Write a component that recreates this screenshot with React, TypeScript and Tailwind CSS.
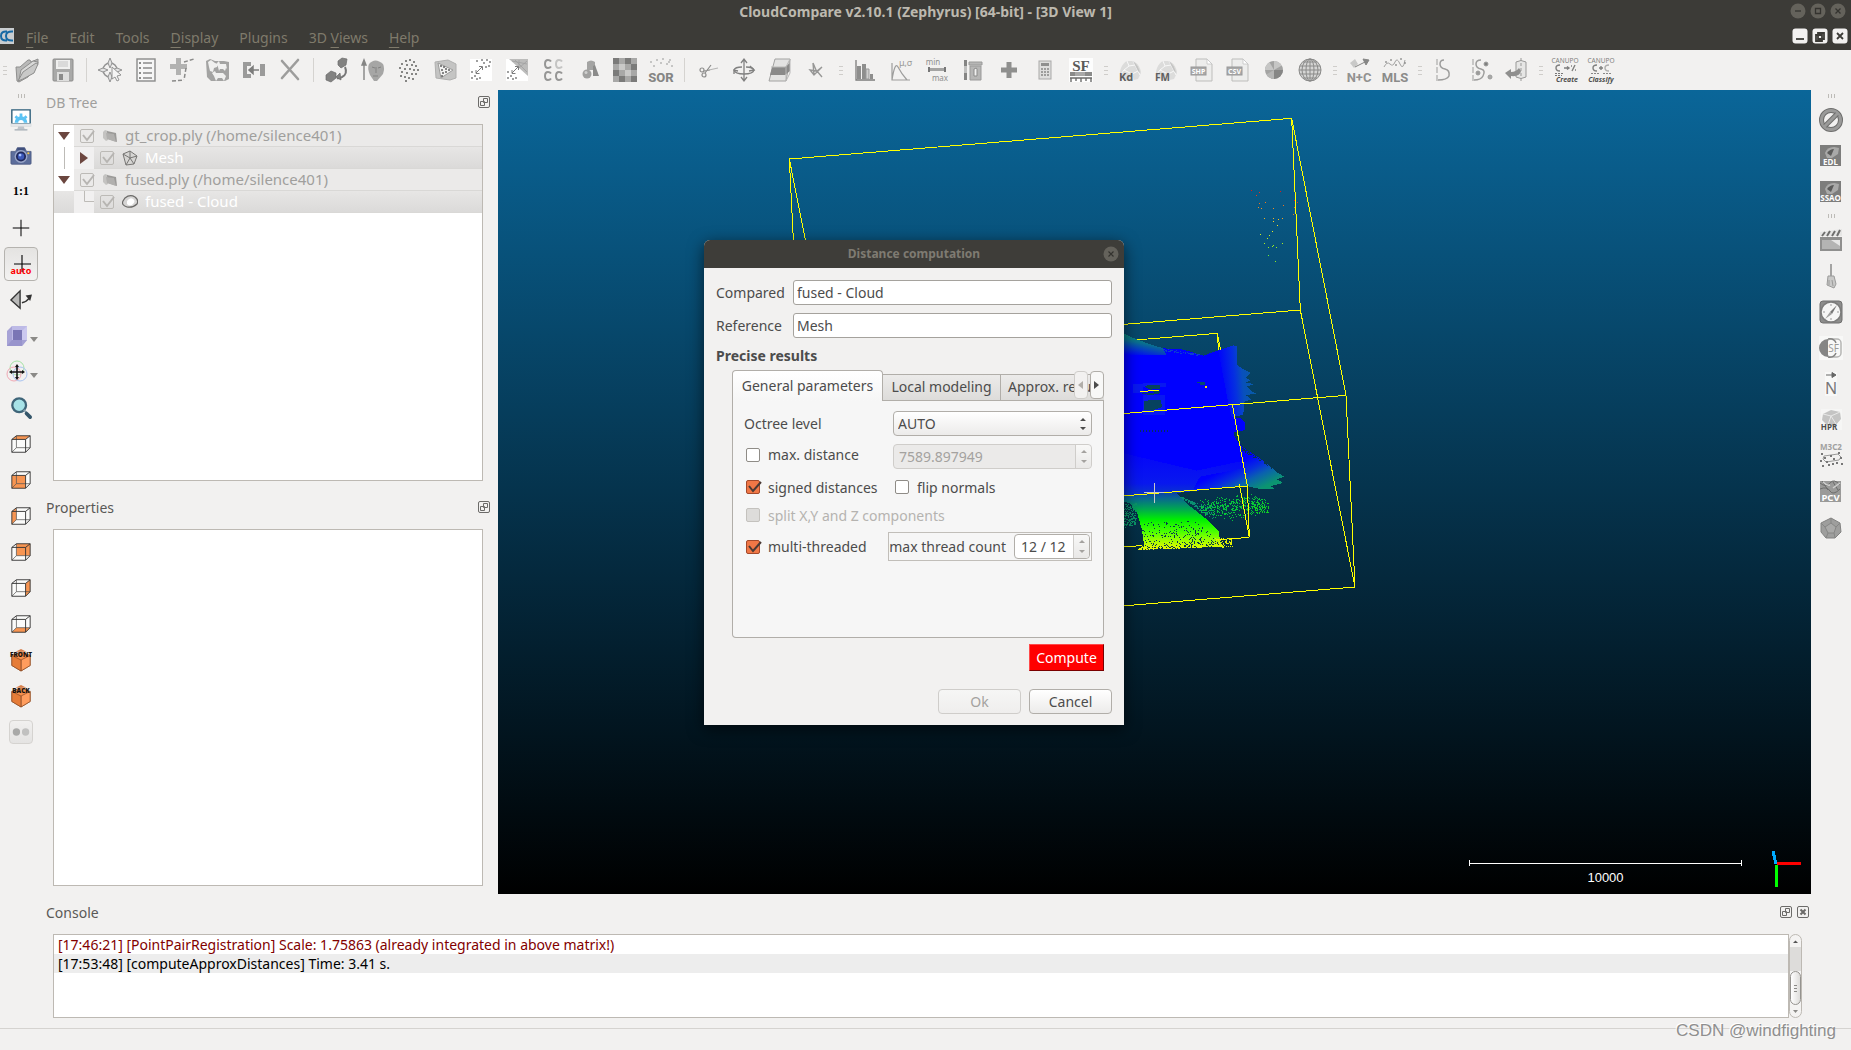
import React, { ReactNode } from 'react';

const SANS = 'font-["Noto_Sans",sans-serif]';

/* ---------- top toolbar icons, all on a 24x24 grid ---------- */

const dots = (pts: number[][], r = 0.8, fill = '#555') =>
  pts.map(([x, y], i) => <rect key={i} x={x - r} y={y - r} width={r * 2} height={r * 2} fill={fill} />);

const rock = (
  <g>
    <path d="M3 20C0 14 4 5 9 3l6 0c5 2 8 8 8 12l-3 6-9 2z" fill="#dcdcdb" />
    <path d="M9 3l2 5-5 4-3 4M11 8l6-1 3 6-6 3-8-4M15 3l2 4M14 16l1 6M20 13l2 4" stroke="#f8f8f8" fill="none" />
    <path d="M17 7l3 6 2 2c-1-5-3-9-7-12z" fill="#c4c4c3" />
  </g>
);

const sheet = (label: string) => (
  <g>
    <path d="M6 1h11l5 5v17H6z" fill="#ededec" stroke="#bdbdbb" />
    <path d="M17 1v5h5z" fill="#fff" stroke="#c4c4c4" strokeWidth=".8" />
    <rect x="1" y="9" width="15" height="8" fill="#a9a9a9" stroke="#989898" />
    <text x="8.5" y="15.6" fontSize="7" fontWeight="700" textAnchor="middle" fill="#fff">{label}</text>
  </g>
);

const ICONS: Record<string, ReactNode> = {
  open: (
    <g strokeLinejoin="round" strokeWidth="1">
      <path d="M1 9l4 0L13 2l2 0 1 2 7-3 0 5-10 13-9 5-2-1z" fill="#b9b9b8" stroke="#8f8f8e" />
      <path d="M4 22L6 12 18 3l5 1-5 11-11 5z" fill="#d9d9d8" stroke="#8f8f8e" />
      <path d="M3 23l5-9L21 5l2 1-4 9-11 6z" fill="#c9c9c8" stroke="#8f8f8e" />
    </g>
  ),
  save: (
    <g>
      <path d="M2 2q0-1 1-1h18q1 0 1 1v20q0 1-1 1H3q-1 0-1-1z" fill="#a9a9a8" stroke="#8d8d8c" />
      <rect x="5" y="2" width="14" height="9" fill="#f0f0ef" />
      <path d="M7 4h10M7 6h10M7 8h10" stroke="#c4c4c4" />
      <rect x="6" y="14" width="12" height="9" fill="#dededd" />
      <rect x="8" y="16" width="4" height="6" fill="#8b8b8a" />
    </g>
  ),
  pick: (
    <g fill="none" stroke="#949494" strokeWidth="1.5">
      <circle cx="12" cy="12" r="7" />
      <path d="M12 0l2 5-2 5-2-5zM12 14l2 5-2 5-2-5zM0 12l5-2 5 2-5 2zM24 12l-5-2-5 2 5 2z" fill="#e4e4e4" strokeWidth="1" />
      <path d="M14 9l9 8-4 1 2 4-2 1-2-4-3 2z" fill="#f5f5f5" strokeWidth="1" />
    </g>
  ),
  list: (
    <g stroke="#8b8b8a">
      <rect x="3" y="1" width="18" height="22" fill="#f6f6f6" strokeWidth="1.4" />
      <path d="M9 5h9M9 10h9M9 15h9M9 20h9" strokeWidth="1.6" />
      <path d="M5 5h2M5 10h2M5 15h2M5 20h2" strokeWidth="2" />
    </g>
  ),
  register: (
    <g>
      <path d="M6 0h5v6h6v5h-6v6H6v-6H0V6h6z" fill="#b2b2b1" />
      <path d="M14 4l10-3M16 10l-2 12M2 23l12-1" stroke="#8a8a89" strokeWidth="1.5" strokeDasharray="4 2" fill="none" />
    </g>
  ),
  clone: (
    <g>
      <path d="M0 3l4-2 5 2h9l5 1v17l-4 2H5l-4-4z" fill="#a3a3a2" />
      <path d="M2 4l3-2 4 3 3 1-1 3-3 1-1 4-3-1-1-4zM11 5l2-2 1 3h6l1 5-1-1-1 3-2-2h-3l-1 2-1-4zM6 15l3-2 1 2h7l3 3-2 5-2-3h-4l-2 3-2-5z" fill="#f0f0ef" />
    </g>
  ),
  merge: (
    <g>
      <path d="M1 4h8v4H5v8h4v4H1zM18 6h5v12h-5z" fill="#9b9b9a" />
      <path d="M17 12H8M11 8.5l-4 3.5 4 3.5z" stroke="#7d7d7c" fill="#7d7d7c" strokeWidth="1.5" />
    </g>
  ),
  cross: <path d="M4 3l16 18M20 2L4 20" stroke="#9d9d9c" strokeWidth="2.6" strokeLinecap="round" />,
  sample: (
    <g fill="#828281" stroke="#6c6c6b" strokeWidth=".7">
      <path d="M13 3l4-3 5 1-1 6-5 3-3-3z" />
      <path d="M1 17l5-4 5 2 0 5-5 4-5-2z" />
      <path d="M20 9q3 7-3 10-3 2-5 1" fill="none" stroke="#777" strokeWidth="2" />
      <path d="M15 15l-4 4 5 3z" />
    </g>
  ),
  mask: (
    <g>
      <path d="M3 22V5M1 7l2-5 2 5z" stroke="#858584" fill="#858584" strokeWidth="1.4" />
      <path d="M8 6q6-7 14 0 2 4 0 10l-6 7h-3l-4-6Q6 10 8 6z" fill="#a6a6a5" />
      <path d="M11 9l3 1M17 10l3-1M15 9v6M12 18l5 0" stroke="#838382" />
    </g>
  ),
  sphereDots: (
    <g>
      {dots([[9, 3], [13, 2], [17, 4], [5, 6], [10, 7], [15, 7], [19, 8], [3, 10], [8, 11], [13, 11], [17, 12], [21, 12], [5, 14], [10, 15], [15, 16], [19, 16], [4, 18], [8, 19], [12, 20], [16, 21], [9, 23]], 0.9, '#6d6d6c')}
    </g>
  ),
  meshSample: (
    <g>
      <path d="M2 4l13-2 8 4v14l-6 2L3 20z" fill="#c4c4c3" stroke="#b0b0af" />
      <path d="M5 5l15 7-12 8z" fill="#f2f2f1" stroke="#9d9d9c" />
      {dots([[8, 8], [11, 9], [9, 12], [13, 11], [16, 12], [10, 15], [13, 14], [9, 18]], 0.8, '#4c4c4c')}
    </g>
  ),
  c2c: (
    <g>
      <rect x="1" y="1" width="22" height="22" fill="#fff" />
      {dots([[8, 3], [13, 2], [18, 2], [21, 4], [15, 5], [20, 8], [17, 9], [3, 14], [6, 18], [3, 20], [8, 21], [11, 20]], 0.8, '#6a6a6a')}
      <path d="M7 15l6-6M10 8.5h3.500v3.500M7 12v3.500h3.500" stroke="#7c7c7c" fill="none" />
    </g>
  ),
  c2m: (
    <g>
      <rect x="1" y="1" width="22" height="22" fill="#fff" />
      <path d="M4 1h19v17z" fill="#bcbcbb" />
      <path d="M10 2l12 12M14 2v8l8-7M7 3l15 3" stroke="#a0a09f" strokeWidth=".8" fill="none" />
      {dots([[3, 14], [6, 18], [3, 20], [8, 21], [11, 20]], 0.8, '#6a6a6a')}
      <path d="M7 15l6-6M10 8.5h3.500v3.500M7 12v3.500h3.500" stroke="#7c7c7c" fill="none" />
    </g>
  ),
  cpc: (
    <g fill="none" stroke="#969695" strokeWidth="2">
      <path d="M10 3.500q-1-1.500-3-1.500-3 0-3 4t3 4q2 0 3-1.500M10 15.500q-1-1.500-3-1.500-3 0-3 4t3 4q2 0 3-1.500M21 15.500q-1-1.500-3-1.500-3 0-3 4t3 4q2 0 3-1.500" />
      <path d="M21 3.500q-1-1.500-3-1.500-3 0-3 4t3 4q2 0 3-1.500" stroke="#c4c4c3" />
    </g>
  ),
  shapes: (
    <g>
      <path d="M10 4q4-3 8 0v8h-8z" fill="#a4a4a3" />
      <path d="M16 8l2-1 4 11h-6z" fill="#8b8b8a" />
      <circle cx="10" cy="16" r="4.5" fill="#a1a1a0" />
      <circle cx="9" cy="14.5" r="1.500" fill="#cfcfce" />
    </g>
  ),
  checker: (
    <g>
      <rect width="24" height="24" fill="#7b7b7a" />
      <path d="M0 6h6v6H0zM12 6h6v6h-6zM6 0h6v6H6zM18 0h6v6h-6zM6 12h6v6H6zM18 12h6v6h-6zM0 18h6v6H0zM12 18h6v6h-6z" fill="#a8a8a7" />
      <path d="M6 6h6v6H6zM12 12h6v6h-6z" fill="#c9c9c8" />
    </g>
  ),
  sor: (
    <g>
      {dots([[2, 4], [8, 2], [14, 1], [21, 2], [5, 8], [12, 5], [18, 6], [23, 8], [20, 4]], 0.8, '#adadac')}
      <text x="12" y="23.5" fontSize="13" fontWeight="800" textAnchor="middle" fill="#858584" fontFamily="Roboto">SOR</text>
    </g>
  ),
  scissors: (
    <g fill="none" stroke="#8d8d8c" strokeWidth="1.2">
      <circle cx="6" cy="12" r="2" />
      <circle cx="8" cy="17" r="2" />
      <path d="M8 13l6-1M9 15l6-8" />
      <path d="M13 12l9-2" stroke="#b5b5b4" />
    </g>
  ),
  move: (
    <g fill="none" stroke="#818180" strokeWidth="1.3">
      <path d="M12 2v20M9 5l3-4 3 4M9 19l3 4 3-4" />
      <path d="M14 9q7 0 8 3-1 4-10 4-9 0-10-4 1-3 8-3" />
      <path d="M6 13l-4-1 0 4M18 8l4 4-5 1" />
    </g>
  ),
  section: (
    <g>
      <path d="M7 1h15l-4 22H1z" fill="#e3e3e2" stroke="#a2a2a1" />
      <path d="M4 9h13l5-4v8l-5 4H2z" fill="#8a8a89" />
      <path d="M18 9l4-8M18 9v14l4-8V1M3 9h14" stroke="#b8b8b7" fill="none" />
    </g>
  ),
  trace: (
    <path d="M9 5l3 7 6 7M9 5l1 12M6 12l7 1 5-4-8 8z" fill="none" stroke="#979796" strokeWidth="1.4" />
  ),
  histogram: (
    <g>
      <path d="M3 2v20h19" fill="none" stroke="#7c7c7b" strokeWidth="1.3" />
      <path d="M4 8h4v13H4zM9 6h4v15H9z" fill="#8e8e8d" />
      <path d="M13 11h3v10h-3z" fill="#cfcfce" stroke="#999" />
      <path d="M17 16h3v5h-3z" fill="#8e8e8d" />
    </g>
  ),
  stats: (
    <g>
      <path d="M3 5v17h18M3 22Q6 3 9 9t9 13" fill="none" stroke="#9d9d9c" strokeWidth="1.2" />
      <text x="10" y="8" fontSize="9" fill="#999998">μ,σ</text>
    </g>
  ),
  minmax: (
    <g fill="#8f8f8e">
      <text x="8" y="7" fontSize="8" textAnchor="middle">min</text>
      <text x="15" y="23" fontSize="8" textAnchor="middle">max</text>
      <rect x="3" y="10" width="18" height="3" fill="#a4a4a3" />
      <path d="M3 9h2v5H3zM19 9h2v5h-2z" fill="#777" />
    </g>
  ),
  trash: (
    <g>
      <path d="M3 2h3v20H3z" fill="#858584" />
      <path d="M3 8h3v7H3z" fill="#c0c0bf" />
      <path d="M8 4h13v3H8zM9 8h11v14H9z" fill="#b6b6b5" stroke="#9a9a99" />
      <path d="M13 11q3-2 3 0v7h-3z" fill="#f0f0ef" stroke="#8b8b8a" />
    </g>
  ),
  plus: <path d="M9.500 4h5v5.500H20v5h-5.500V20h-5v-5.500H4v-5h5.500z" fill="#8f8f8e" />,
  calc: (
    <g>
      <rect x="6" y="3" width="12" height="18" fill="#dededd" stroke="#a9a9a8" />
      <rect x="8" y="5" width="8" height="3" fill="#8f8f8e" />
      <path d="M8 11h8M8 14h8M8 17h8" stroke="#9d9d9c" strokeWidth="2" strokeDasharray="2 1" />
    </g>
  ),
  sf: (
    <g>
      <rect width="24" height="24" fill="#fdfdfd" />
      <text x="12" y="12.5" fontSize="15" fontWeight="700" textAnchor="middle" fill="#5a5a59" fontFamily="Liberation Serif">SF</text>
      <rect x="1" y="14" width="22" height="4" fill="#8b8b8a" />
      <rect x="6" y="14" width="10" height="4" fill="#a9a9a8" />
      <path d="M1 20h22M2 20v4M7 20v3M12 20v4M17 20v3M22 20v4" stroke="#6c6c6b" strokeWidth="1.4" />
    </g>
  ),
  kd: <g>{rock}<text x="1" y="23" fontSize="11" fontWeight="700" fill="#5f5f5e">Kd</text></g>,
  fm: <g>{rock}<text x="1" y="23" fontSize="10" fontWeight="700" fill="#5f5f5e">FM</text></g>,
  shp: sheet('SHP'),
  csv: sheet('CSV'),
  wheel: (
    <g>
      <circle cx="12" cy="12" r="9" fill="#a3a3a2" />
      <path d="M12 12L3 12A9 9 0 0 1 7.500 4.200zM12 12L12 3A9 9 0 0 1 19.800 7.500z" fill="#c6c6c5" />
      <path d="M12 12L21 12A9 9 0 0 1 12 21z" fill="#868685" />
      <path d="M12 12L4.200 16.500A9 9 0 0 0 12 21z" fill="#b5b5b4" />
    </g>
  ),
  globe: (
    <g fill="none" stroke="#8a8a89">
      <circle cx="12" cy="12" r="11" fill="#d5d5d4" />
      <ellipse cx="12" cy="12" rx="4" ry="11" />
      <ellipse cx="12" cy="12" rx="8" ry="11" />
      <path d="M1 12h22M2 8h20M2 16h20M5 4h14M5 20h14M12 1v22" />
    </g>
  ),
  nc: (
    <g>
      <path d="M3 5l5-4 3 5-4 4z" fill="#c9c9c8" />
      <path d="M8 9L20 3M16 1l6 1-3 5z" stroke="#868685" fill="#868685" />
      <text x="12" y="24" fontSize="13" fontWeight="700" textAnchor="middle" fill="#929291" fontFamily="Roboto">N+C</text>
    </g>
  ),
  mls: (
    <g>
      <path d="M1 9q3-6 6-3t5-2 5 2 5-4" stroke="#a1a1a0" fill="none" />
      {dots([[3, 4], [8, 2], [13, 7], [18, 1], [22, 5]], 0.8, '#8b8b8a')}
      <text x="12" y="24" fontSize="13" fontWeight="700" textAnchor="middle" fill="#8b8b8a" fontFamily="Roboto">MLS</text>
    </g>
  ),
  curve: (
    <g fill="none" stroke="#9d9d9c">
      <path d="M5 1v22" strokeDasharray="6 2" />
      <path d="M12 2q-4 0-4 4 0 4 5 5t4 7q-2 4-11 4" strokeWidth="1.500" />
    </g>
  ),
  curveDots: (
    <g fill="none" stroke="#9d9d9c">
      <path d="M5 1v22" strokeDasharray="6 2" />
      <path d="M13 2q-5 0-5 4 0 4 5 5t2 7q-2 4-9 4" strokeWidth="1.500" />
      <circle cx="18" cy="6" r="2" fill="#7f7f7e" />
      <circle cx="10" cy="15" r="2" fill="#9b9b9a" />
      <circle cx="22" cy="19" r="2" fill="#a9a9a8" />
    </g>
  ),
  unroll: (
    <g>
      <path d="M12 4q5-3 10 0v15q-5 3-10 0z" fill="#e6e6e5" stroke="#999998" />
      <path d="M17 0v24" stroke="#999998" strokeDasharray="3 2" />
      <path d="M17 13q-1 6-10 5v3l-6-6 6-4v3q5 0 8-4z" fill="#8f8f8e" />
    </g>
  ),
  canupoCreate: (
    <g fill="#7f7f7e" textAnchor="middle">
      <text x="12" y="5" fontSize="6.5">CANUPO</text>
      <path d="M7 7q-4 0-4 3t4 3M11 10h4M14 8.500l2 1.500-2 1.500M22 7l-3 6M18 8h1M22 12h1" stroke="#7f7f7e" fill="none" strokeWidth="1.4" />
      <path d="M2 15.500h9M2 17.500h7" stroke="#777" strokeDasharray="2 1" />
      <text x="14" y="23.5" fontSize="7" fontWeight="700" fontStyle="italic" fill="#4f4f4e">Create</text>
    </g>
  ),
  canupoClassify: (
    <g fill="#7f7f7e" textAnchor="middle">
      <text x="12" y="5" fontSize="6.5">CANUPO</text>
      <path d="M8 7q-4 0-4 3t4 3M12 8v4M10 10h4" stroke="#7f7f7e" fill="none" strokeWidth="1.4" />
      <path d="M20 7q-4 0-4 3t4 3" stroke="#adadac" fill="none" strokeWidth="1.4" />
      <path d="M2 15.500h8M14 15.500h8" stroke="#888" strokeDasharray="2 1" />
      <text x="12" y="23.5" fontSize="7" fontWeight="700" fontStyle="italic" fill="#4f4f4e">Classify</text>
    </g>
  ),
};

/* ---------- left view toolbar ---------- */

const wire = (face: string) => (
  <g strokeLinejoin="round">
    <path d="M2 7h15v14H2zM7 3h15v13H7z" fill="#fbfbfa" />
    <path d={face} fill="#f79552" />
    <path d="M7 3v13h15M7 16l-5 5" fill="none" stroke="#555" strokeWidth=".8" />
    <path d="M2 7h15v14H2zM2 7l5-4h15v13l-5 5M17 7l5-4" fill="none" stroke="#333" strokeWidth="1" />
  </g>
);

const box = (label: string) => (
  <g>
    <path d="M12 3l10 4v11l-10 6-10-6V7z" fill="#f68f4c" stroke="#9a5b33" strokeWidth=".8" />
    <path d="M12 12l10-5v11l-10 6z" fill="#ff9d5e" stroke="#8a4c26" strokeWidth=".8" />
    <path d="M12 12L2 7v11l10 6z" fill="#e67c38" stroke="#8a4c26" strokeWidth=".8" />
    <path d="M6 3l6-3 6 3z" fill="#d8804c" />
    <text x="12" y="8.5" fontSize="7" fontWeight="900" textAnchor="middle" fill="#15110f">{label}</text>
  </g>
);

const LEFT: Record<string, ReactNode> = {
  display: (
    <g>
      <path d="M2 1h20v15H2z" fill="#fff" stroke="#2c5d7a" strokeWidth="1.5" />
      <path d="M5 15a7 7 0 0 1 14 0h-4a3 3 0 0 0-6 0z" fill="#5cc3f4" />
      <path d="M6 8l2 2M12 5v4M18 8l-2 2" stroke="#5cc3f4" strokeWidth="3" />
      <path d="M1 16h22v3H1z" fill="#e6e7ea" stroke="#cfd2d6" strokeWidth=".5" />
      <path d="M9 19h6l1 3H8z" fill="#bfc4ca" />
      <path d="M5 22h14v1.500H5z" fill="#a8b0b8" />
    </g>
  ),
  camera: (
    <g>
      <path d="M1 7h5l2-4h8l2 4h5v13q0 1-1 1H2q-1 0-1-1z" fill="#5c6d9b" stroke="#47557d" strokeWidth=".8" />
      <path d="M8 3h8v3H8z" fill="#3f4f7c" />
      <circle cx="12" cy="12.5" r="7" fill="#9aa6c8" />
      <circle cx="12" cy="12.5" r="5.5" fill="#20295c" />
      <circle cx="12" cy="12.5" r="3.5" fill="#3b57b8" />
      <circle cx="11" cy="11" r="1.500" fill="#a9c4ff" />
      <circle cx="20" cy="9" r="1.200" fill="#f5c542" />
    </g>
  ),
  one: <text x="12" y="15.5" fontSize="13" fontWeight="700" textAnchor="middle" fill="#000" fontFamily="Liberation Serif">1:1</text>,
  plus: <path d="M12 3v18M3 12h18" stroke="#000" strokeWidth="1.1" />,
  mirror: (
    <g>
      <path d="M11 2v19L1 12z" fill="#b9b9b8" stroke="#333" strokeWidth="1.5" />
      <path d="M13 15q5-1 8-5" fill="none" stroke="#333" strokeWidth="1.6" />
      <path d="M17 7l7-1-2 7z" fill="#333" />
    </g>
  ),
  magnifier: (
    <g>
      <circle cx="10" cy="9" r="7.5" fill="#a7e3e8" stroke="#3f6579" strokeWidth="2.5" />
      <path d="M15 14l3 3" stroke="#8aa0ad" strokeWidth="2" />
      <path d="M18 18l4 4" stroke="#35566a" strokeWidth="4" strokeLinecap="round" />
    </g>
  ),
  top: wire('M2 7l5-4h15l-5 4z'),
  front: wire('M2 7h15v14H2z'),
  left: wire('M2 7l5-4v13l-5 5z'),
  back: wire('M7 3h15v13H7z'),
  right: wire('M17 7l5-4v13l-5 5z'),
  bottom: wire('M2 21l5-5h15l-5 5z'),
  isoFront: box('FRONT'),
  isoBack: box('BACK'),
  stereo: (
    <g>
      <circle cx="7" cy="12" r="4" fill="#a9a9a8" />
      <circle cx="17" cy="12" r="4" fill="#c1c1c0" />
    </g>
  ),
  cube: (
    <g>
      <path d="M2 7l5-5h15v14l-5 6H2z" fill="#a7a3d6" />
      <path d="M7 2h15v14H7z" fill="#bdbae6" />
      <path d="M8 6h9v10H8z" fill="#7a76b5" />
      <path d="M17 7l5-5v14l-5 6z" fill="#d1cff2" opacity=".7" />
      <path d="M2 22l5-6h15l-5 6z" fill="#8e8ac4" opacity=".6" />
    </g>
  ),
  pan: (
    <g>
      <circle cx="12" cy="8" r="7" fill="none" stroke="#a5e3a5" />
      <circle cx="9" cy="14" r="7" fill="none" stroke="#f0a9b4" />
      <circle cx="15" cy="14" r="7" fill="none" stroke="#a9c4f0" />
      <path d="M12 6v12M6 12h12" stroke="#111" strokeWidth="1.6" />
      <path d="M10 7l2-3 2 3zM10 17l2 3 2-3zM7 10l-3 2 3 2zM17 10l3 2-3 2z" fill="#111" />
    </g>
  ),
};

/* ---------- right plugin toolbar ---------- */

const shader = (label: string) => (
  <g>
    <rect x="1" y="1" width="21" height="21" fill="#7d7d7c" />
    <path d="M6 9q2-6 9-6l5 1-1 6-6 4-5 0z" fill="#a9a9a8" />
    <path d="M8 9q3-4 7-4l-3 7z" fill="#5c5c5b" />
    <text x="11.5" y="21" fontSize="8" fontWeight="700" textAnchor="middle" fill="#fff">{label}</text>
  </g>
);

const RIGHT: Record<string, ReactNode> = {
  none: (
    <g fill="none">
      <circle cx="12" cy="12" r="9.5" stroke="#6d6d6c" strokeWidth="5" />
      <circle cx="12" cy="12" r="9.5" stroke="#9a9a99" strokeWidth="3" />
      <path d="M6 18L18 6" stroke="#6d6d6c" strokeWidth="5" />
      <path d="M5.500 18.500L18.500 5.500" stroke="#9a9a99" strokeWidth="3" />
    </g>
  ),
  edl: shader('EDL'),
  ssao: shader('SSAO'),
  clapper: (
    <g>
      <rect x="1" y="9" width="22" height="14" fill="#8f8f8e" />
      <rect x="3" y="12" width="18" height="9" fill="#b4b4b3" />
      <path d="M12 12h9v6z" fill="#e6e6e5" />
      <path d="M1 4l22-3v7H1z" fill="#e6e6e5" />
      <path d="M3 8l3-4M8 8l3-5M13 8l3-5M18 8l3-6" stroke="#6f6f6e" strokeWidth="2" />
    </g>
  ),
  broom: (
    <g>
      <path d="M12 0v13" stroke="#a4a4a3" strokeWidth="2" />
      <path d="M9 12h6l2 8-2 4-7-3z" fill="#c9c9c8" stroke="#9b9b9a" />
      <path d="M10 16l0 5M13 16l1 6" stroke="#9b9b9a" />
    </g>
  ),
  compass: (
    <g>
      <rect x="1" y="1" width="22" height="22" rx="3" fill="#8d8d8c" stroke="#6f6f6e" />
      <circle cx="12" cy="12" r="10" fill="#f6f6f5" stroke="#7c7c7b" strokeWidth="1.500" />
      <path d="M18 5l-5 9-2-2z" fill="#777" />
      <path d="M6 19l5-7 2 2z" fill="#a0a09f" />
      <path d="M12 4v2M12 18v2M4 12h2M18 12h2" stroke="#999" />
    </g>
  ),
  sf: (
    <g>
      <rect width="24" height="24" fill="#f8f8f7" />
      <rect x="8" y="3" width="14" height="18" rx="4" fill="none" stroke="#b5b5b4" strokeWidth="1.500" />
      <path d="M9 3a9 9 0 0 0 0 18z" fill="#858584" />
      <path d="M9 3q6-1 8 4M9 21q6 1 8-4" stroke="#858584" fill="none" strokeWidth="1.500" />
      <text x="14.5" y="16" fontSize="10" textAnchor="middle" fill="#9a9a99">SF</text>
    </g>
  ),
  normal: (
    <g>
      <rect x="6" width="12" height="24" fill="#f8f8f7" />
      <path d="M7 3h7M13 0.500l4 2.500-4 2.500z" stroke="#666" fill="#666" />
      <text x="12" y="22" fontSize="16" textAnchor="middle" fill="#777">N</text>
    </g>
  ),
  hpr: (
    <g>
      <rect x="2" y="1" width="21" height="21" fill="#f6f6f5" />
      <path d="M4 6l8-4 9 2 1 7-6 7-8-1-5-5z" fill="#c4c4c3" />
      <path d="M4 6l8 2 9-4M12 8l-3 9M12 8l5 8" stroke="#e9e9e8" fill="none" />
      <text x="10" y="21.5" fontSize="8" fontWeight="700" textAnchor="middle" fill="#4c4c4b">HPR</text>
    </g>
  ),
  m3c2: (
    <g>
      <text x="12" y="6" fontSize="8" fontWeight="700" textAnchor="middle" fill="#a0a09f">M3C2</text>
      <path d="M5 12l14-2 3 3-2 3-13 2-3-3z" fill="none" stroke="#9a9a99" />
      {dots([[3, 10], [6, 14], [2, 17], [8, 18], [12, 12], [15, 15], [20, 9], [22, 14], [18, 19], [10, 21], [4, 22], [14, 20], [23, 20]], 1, '#777')}
    </g>
  ),
  pcv: (
    <g>
      <rect x="1" y="1" width="21" height="21" fill="#9a9a99" />
      <path d="M1 3q6 5 10 0t10 2M3 1l6 9M14 2l5 8M1 9q7-3 10 2t10-2" stroke="#6c6c6b" fill="none" />
      <path d="M4 2q4 4 7 3M14 8l7-5" stroke="#cfcfce" fill="none" strokeWidth="1.500" />
      <text x="11.5" y="21" fontSize="9.5" fontWeight="700" textAnchor="middle" fill="#fff">PCV</text>
    </g>
  ),
  poly: (
    <g>
      <path d="M12 2l9 5 1 9-6 6H7l-5-6V7z" fill="#9e9e9d" stroke="#828281" />
      <path d="M12 7l5 4-2 6H9l-3-6z" fill="#a9a9a8" stroke="#868685" />
      <path d="M12 7V2M17 11l4-4M15 17l1 5M9 17l-2 5M6 11L2 7" stroke="#868685" />
    </g>
  ),
};

const Glyph = ({ children, className = 'h-6 w-6' }: { children: ReactNode; className?: string }) => (
  <svg viewBox="0 0 24 24" className={`${className} shrink-0 overflow-visible`} aria-hidden="true">{children}</svg>
);

const TOP_BAR = [
  'open', 'save', '|', 'pick', 'list', 'register', 'clone', 'merge', 'cross', '|',
  'sample', 'mask', 'sphereDots', 'meshSample', 'c2c', 'c2m', 'cpc', 'shapes', 'checker', 'sor', '|',
  'scissors', 'move', 'section', 'trace', ':', 'histogram', 'stats', 'minmax', 'trash', 'plus', 'calc', 'sf', ':',
  'kd', 'fm', 'shp', 'csv', 'wheel', 'globe', ':', 'nc', 'mls', ':', 'curve', 'curveDots', 'unroll', ':',
  'canupoCreate', 'canupoClassify',
];

const Grip = () => (
  <span className="flex w-1 flex-col gap-[3px]">
    <i className="h-px bg-[#cfcdca]" />
    <i className="h-px bg-[#cfcdca]" />
    <i className="h-px bg-[#cfcdca]" />
  </span>
);

const SideGrip = () => (
  <div className="flex h-3 items-center justify-center gap-[2px]">
    <i className="h-1 w-px bg-[#bdbbb7]" />
    <i className="h-1 w-px bg-[#bdbbb7]" />
    <i className="h-1 w-px bg-[#bdbbb7]" />
  </div>
);

const TopToolbar = () => (
  <div className="flex h-10 shrink-0 items-center bg-[#f2f1f0]">
    <div className="flex w-[9px] justify-center"><Grip /></div>
    {TOP_BAR.map((name, i) => {
      if (name === '|') {
        return <span key={i} className="flex w-[11px] justify-center"><i className="h-6 w-px bg-[#d5d3d0]" /></span>;
      }
      if (name === ':') {
        return <span key={i} className="flex w-[13px] justify-center"><Grip /></span>;
      }
      return (
        <button key={i} type="button" aria-label={name} className="flex h-9 w-9 items-center justify-center">
          <Glyph>{ICONS[name]}</Glyph>
        </button>
      );
    })}
  </div>
);

const LeftToolbar = () => (
  <div className="flex w-[42px] shrink-0 flex-col">
    <SideGrip />
    {['display', 'camera', 'one', 'plus', 'auto', 'mirror', 'cube', 'pan', 'magnifier', 'top', 'front', 'left', 'back', 'right', 'bottom', 'isoFront', 'isoBack', 'stereo'].map((name) => {
      if (name === 'auto') {
        return (
          <button key={name} type="button" aria-label={name} className="flex h-9 items-center justify-center">
            <span className="flex h-[34px] w-[34px] items-center justify-center rounded border border-[#b5b3af] bg-linear-to-b from-[#e4e3e1] to-[#f3f2f1]">
              <Glyph>
                <path d="M13 3v17M5 12h17" stroke="#000" strokeWidth="1.1" />
                <text x="12" y="22" fontSize="9" fontWeight="700" textAnchor="middle" fill="#f00">auto</text>
              </Glyph>
            </span>
          </button>
        );
      }
      if (name === 'cube' || name === 'pan') {
        return (
          <button key={name} type="button" aria-label={name} className="flex h-9 items-center gap-px pl-[5px]">
            <Glyph>{LEFT[name]}</Glyph>
            <svg viewBox="0 0 8 6" className="mt-2 h-[6px] w-2"><path d="M0 0h8L4 5z" fill="#8b8a87" /></svg>
          </button>
        );
      }
      if (name === 'stereo') {
        return (
          <button key={name} type="button" aria-label={name} className="flex h-9 items-center justify-center">
            <span className="rounded-sm border border-[#d5d3d0] bg-linear-to-b from-[#f1f0ef] to-[#e4e3e2]">
              <Glyph className="h-[22px] w-[22px]">{LEFT[name]}</Glyph>
            </span>
          </button>
        );
      }
      return (
        <button key={name} type="button" aria-label={name} className="flex h-9 items-center justify-center">
          <Glyph className="h-[22px] w-[22px]">{LEFT[name]}</Glyph>
        </button>
      );
    })}
  </div>
);

const RightToolbar = () => (
  <div className="flex w-10 shrink-0 flex-col">
    <SideGrip />
    {['none', 'edl', 'ssao', ':', 'clapper', 'broom', 'compass', 'sf', 'normal', 'hpr', 'm3c2', 'pcv', 'poly'].map((name) =>
      name === ':' ? (
        <SideGrip key={name} />
      ) : (
        <button key={name} type="button" aria-label={name} className="flex h-9 items-center justify-center">
          <Glyph>{RIGHT[name]}</Glyph>
        </button>
      )
    )}
  </div>
);

/* ---------- header ---------- */

const MENU: [string, string, string][] = [
  ['', 'F', 'ile'],
  ['Edit', '', ''],
  ['Tools', '', ''],
  ['', 'D', 'isplay'],
  ['Plugins', '', ''],
  ['3D ', 'V', 'iews'],
  ['', 'H', 'elp'],
];

const Header = () => (
  <header className="shrink-0 bg-[#3c3b37]">
    <div className="relative flex h-[22px] items-center justify-center">
      <h1 className="text-[14px] font-bold text-[#bdb9af]">CloudCompare v2.10.1 (Zephyrus) [64-bit] - [3D View 1]</h1>
      <div className="absolute right-[5px] flex gap-1">
        {['M5 8h6', 'M5.500 5.500h5v5h-5z', 'M5.500 5.500l5 5M10.500 5.500l-5 5'].map((d) => (
          <button key={d} type="button" aria-label="Window control" className="h-4 w-4">
            <svg viewBox="0 0 16 16"><circle cx="8" cy="8" r="7.5" fill="#64625b" /><path d={d} stroke="#34332f" fill="none" strokeWidth="1.3" /></svg>
          </button>
        ))}
      </div>
    </div>
    <div className="flex h-7 items-center text-[14px] text-[#7f7a6b]">
      <svg viewBox="0 0 14 16" className="mr-3 h-4 w-[14px]">
        <rect width="14" height="16" fill="#c9cdd0" />
        <path d="M7 3.500Q1 3 1 8t6 4.500M13 3.500Q6 3 6 8t7 4.500" fill="none" stroke="#1669a4" strokeWidth="2" />
      </svg>
      <nav className="flex flex-1 gap-[21px] pt-[2px]">
        {MENU.map(([before, key, after]) => (
          <button key={before + key + after} type="button">
            {before}<span className="underline underline-offset-4">{key}</span>{after}
          </button>
        ))}
      </nav>
      <div className="flex gap-1 pr-[3px]">
        {['M4 11h8', 'M6 5h6v6H6zM4 7h6v6H4z', 'M5 5l6 6M11 5l-6 6'].map((d) => (
          <button key={d} type="button" aria-label="View control" className="h-4 w-4">
            <svg viewBox="0 0 16 16"><rect x="0.5" y="0.5" width="15" height="15" rx="3" fill="#f2f1f0" /><path d={d} stroke="#3c3b37" fill="none" strokeWidth="1.8" /></svg>
          </button>
        ))}
      </div>
    </div>
  </header>
);

/* ---------- docks ---------- */

const FloatButton = ({ close = false }: { close?: boolean }) => (
  <button type="button" aria-label={close ? 'Close' : 'Float'} className="h-3 w-3 text-[#6c6b69]">
    <svg viewBox="0 0 12 12" fill="none" stroke="currentColor">
      <rect x="0.5" y="0.5" width="11" height="11" rx="1.500" />
      {close ? <path d="M3.500 3.500l5 5M8.500 3.500l-5 5" strokeWidth="2" /> : <path d="M5.500 2.500h4v4h-4zM2.500 5.500h4v4h-4z" />}
    </svg>
  </button>
);

const DockTitle = ({ title, dim = false, closable = false }: { title: string; dim?: boolean; closable?: boolean }) => (
  <div className={`mb-[10px] flex h-6 shrink-0 items-center justify-between pl-1 ${dim ? 'text-[#a09f9d]' : 'text-[#5a5957]'} ${closable ? 'pr-[2px]' : 'pr-2'}`}>
    <h2 className="text-[14px]">{title}</h2>
    <span className="flex gap-[5px]">
      <FloatButton />
      {closable && <FloatButton close />}
    </span>
  </div>
);

const FolderIcon = () => (
  <svg viewBox="0 0 16 16" className="h-4 w-4">
    <path d="M1 4l2-2 3 1v9l-2 1-3-3z" fill="#c4c3c1" />
    <path d="M5 3l9 2 1 9-9-3z" fill="#9b9a98" />
    <path d="M4 5l8 1 2 8-9-3z" fill="#b1b0ae" />
  </svg>
);

const MeshIcon = () => (
  <svg viewBox="0 0 16 16" className="h-4 w-4" fill="none" stroke="#777674">
    <path d="M1 4l7-3 7 5-3 8-8 1z" fill="#d6d5d3" />
    <path d="M1 4l7 4V1M15 6L8 8l4 6M4 15l4-7" />
  </svg>
);

const CloudIcon = () => (
  <svg viewBox="0 0 16 16" className="h-4 w-4">
    <path d="M3 4q5-4 10-1 4 3 2 7-4 4-10 3-6-2-4-6z" fill="#d6d5d4" stroke="#6a6967" strokeWidth="1.2" />
    <path d="M5 7q3-4 6-2t0 5-6 0z" fill="#fff" />
  </svg>
);

interface TreeRowProps {
  label: string;
  icon: ReactNode;
  indent: ReactNode;
  selected?: boolean;
}

const TreeRow = ({ label, icon, indent, selected = false }: TreeRowProps) => (
  <li className="flex h-[22px]">
    {indent}
    <label className={`flex flex-1 items-center border-b border-[#d9d8d6] pl-[6px] ${selected ? 'bg-linear-to-b from-[#e7e6e5] to-[#dbdad9] text-white' : 'bg-[#ebeae9] text-[#a09f9d]'}`}>
      <span className="relative h-[14px] w-[14px]">
        <input type="checkbox" defaultChecked className="block h-[14px] w-[14px] appearance-none rounded-[2px] border border-[#bcbab6]" />
        <svg viewBox="0 0 14 14" className="pointer-events-none absolute inset-0 overflow-visible"><path d="M3 6l4 5 7-9" fill="none" stroke="#b7b5b2" strokeWidth="2" /></svg>
      </span>
      <span className="ml-2 mr-[7px]">{icon}</span>
      <span className="text-[15px]">{label}</span>
    </label>
  </li>
);

const Cell = ({ className = '', d, stroke }: { className?: string; d: string; stroke?: boolean }) => (
  <svg viewBox="0 0 20 22" className={`h-[22px] w-5 shrink-0 ${className}`}>
    <path d={d} fill={stroke ? 'none' : '#6b463f'} stroke={stroke ? '#bdbbb7' : 'none'} />
  </svg>
);

const DOWN = 'M4 7h12l-6 8z';

const DbTree = () => (
  <ul className="ml-[11px] mr-[15px] min-h-0 flex-1 border border-[#bdb9b3] bg-white">
    <TreeRow label="gt_crop.ply (/home/silence401)" icon={<FolderIcon />} indent={<Cell d={DOWN} />} />
    <TreeRow
      selected
      label="Mesh"
      icon={<MeshIcon />}
      indent={<><Cell d="M10.500 0v22" stroke /><Cell className="bg-[#f1f0f0]" d="M6 5l8 6-8 6z" /></>}
    />
    <TreeRow label="fused.ply (/home/silence401)" icon={<FolderIcon />} indent={<Cell d={DOWN} />} />
    <TreeRow
      selected
      label="fused - Cloud"
      icon={<CloudIcon />}
      indent={<><Cell className="bg-linear-to-b from-[#e7e6e5] to-[#dbdad9]" d="" /><Cell className="bg-[#f1f0f0]" d="M10.500 0v10.500h10" stroke /></>}
    />
  </ul>
);

/* ---------- 3D view ---------- */

// small deterministic generator, so that the cloud is the same on every render
const random = (seed: number) => {
  let s = seed;
  return () => {
    s = (s * 16807) % 2147483647;
    return s / 2147483647;
  };
};

const scatter = (seed: number, count: number, place: (a: number, b: number, c: number) => [number, number]) => {
  const next = random(seed);
  let d = '';
  for (let i = 0; i < count; i += 1) {
    const [x, y] = place(next(), next(), next());
    d += `M${Math.round(x / 3) * 3} ${Math.round(y / 3) * 3}h3v3h-3z`;
  }
  return d;
};

const TREE_R = scatter(11, 430, (a, b, c) => [300 + a * 195, 1224 - a * 10 + (b + c - 1) * (44 - Math.abs(a - 0.55) * 34)]);
const TREE_FAR = scatter(61, 60, (a, b) => [455 + a * 50, 1205 + b * 32]);
const TREE_R2 = scatter(5, 110, (a, b) => [240 + a * 100, 1190 + a * 30 + b * 40 * a]);
const TREE_L = scatter(7, 210, (a, b) => [60 + a * 48, 1215 + b * 68 - a * 8]);
const HOLES = scatter(23, 330, (a, b) => {
  const y = 1348 - b * b * 85;
  const right = 290 + (y - 1255) * 0.85;
  return [125 + a * (right - 125), y];
});
const FRAY = scatter(31, 70, (a, b) => [345 + a * 52, 1312 + b * 30]);
const WING_FRAY = scatter(41, 110, (a, b) => [425 + a * 120, 1045 + a * 72 + (b - 0.5) * 10]);
const TOP_FRAY = scatter(43, 60, (a, b) => [190 + a * 110, 748 + a * 16 + (b - 0.5) * 6]);

const OUTLIERS: [number, number, string][] = [
  [453, 269, '#e01818'], [477, 276, '#e8301a'], [468, 285, '#f03c14'], [541, 273, '#e01818'], [582, 300, '#f01010'], [591, 305, '#e83a1a'],
  [477, 309, '#e87020'], [495, 306, '#f07818'], [474, 321, '#f08a20'], [483, 324, '#f0902a'], [519, 324, '#f08a20'], [549, 315, '#f07020'],
  [582, 321, '#e87020'], [579, 342, '#f08010'], [492, 354, '#f0b020'], [519, 354, '#f0b020'], [534, 357, '#f0c020'], [546, 354, '#f0a020'],
  [520, 363, '#ffd020'], [530, 375, '#ffe020'], [516, 393, '#e8f020'], [480, 402, '#d0f020'], [507, 405, '#c8f020'], [501, 414, '#b8f020'],
  [492, 429, '#b0f020'], [546, 429, '#a8f020'], [504, 441, '#98f020'], [516, 438, '#98f020'], [519, 435, '#98f020'], [528, 441, '#98f020'],
  [504, 465, '#70f030'], [525, 483, '#90f020'],
];

const Scene = () => (
  <svg viewBox="-1806 -30 3939 2412" preserveAspectRatio="xMinYMin slice" shapeRendering="crispEdges" className="absolute inset-0 h-full w-full" aria-hidden="true">
    <defs>
      <linearGradient id="ground" gradientUnits="userSpaceOnUse" x1="0" y1="1175" x2="0" y2="1350">
        <stop offset="0" stopColor="#0a3cb0" />
        <stop offset=".12" stopColor="#08688f" />
        <stop offset=".3" stopColor="#00a850" />
        <stop offset=".48" stopColor="#00f000" />
        <stop offset=".68" stopColor="#48ff00" />
        <stop offset=".86" stopColor="#a8ff00" />
        <stop offset="1" stopColor="#f0f800" />
      </linearGradient>
      <linearGradient id="edge" gradientUnits="userSpaceOnUse" x1="355" y1="800" x2="470" y2="790">
        <stop offset="0" stopColor="#0000ff" />
        <stop offset=".4" stopColor="#0530e0" />
        <stop offset=".6" stopColor="#0850bd" />
        <stop offset="1" stopColor="#075f9c" />
      </linearGradient>
      <linearGradient id="wing" gradientUnits="userSpaceOnUse" x1="440" y1="1075" x2="485" y2="1165">
        <stop offset="0" stopColor="#0000ff" />
        <stop offset=".35" stopColor="#0830dd" />
        <stop offset=".6" stopColor="#0a60b0" />
        <stop offset="1" stopColor="#0b9570" />
      </linearGradient>
      <linearGradient id="low" gradientUnits="userSpaceOnUse" x1="150" y1="1070" x2="150" y2="1185">
        <stop offset="0" stopColor="#0508f8" />
        <stop offset=".7" stopColor="#0818ee" />
        <stop offset="1" stopColor="#0a38c8" />
      </linearGradient>
      <linearGradient id="rim" gradientUnits="userSpaceOnUse" x1="95" y1="700" x2="82" y2="765">
        <stop offset="0" stopColor="#0b8a72" />
        <stop offset=".35" stopColor="#0a6f90" />
        <stop offset="1" stopColor="#0000ff" />
      </linearGradient>
    </defs>

    {/* outer box and the far edges of the inner one */}
    <g fill="none" stroke="#ffff00" strokeWidth="3">
      <path d="M-932 177L575 55L601 630L60 674M575 55L738 886L765 1461L40 1520M601 630L765 1461M-932 177L-917 480M-932 177L-872 480" />
      <path d="M106 720L352 700L356 755M352 700L362 752" />
      <path d="M30 1344L448 1312" />
    </g>

    <path d="M30 690L72 701L105 716L150 733L190 745L245 748L275 756L310 767L350 753L380 743L400 736L411 738L412 795L430 808L453 819L438 832L450 842L436 848L465 852L440 860L458 876L470 880L438 886L455 899L432 905L430 945L395 951L420 954L436 968L435 990L400 998L408 1018L425 1040L470 1068L510 1098L530 1116L553 1130L530 1138L550 1149L512 1158L525 1167L484 1168L440 1158L330 1168L240 1178L30 1190Z" fill="#0000ff" />
    <path d="M30 690L72 701L105 716L150 733L190 745L200 765L30 765Z" fill="url(#rim)" />
    <path d="M355 752L380 743L400 736L411 738L412 795L430 808L453 819L438 832L450 842L436 848L465 852L440 860L458 876L470 880L438 886L455 899L432 905L430 945L395 951L385 910Z" fill="url(#edge)" />
    <path d="M30 1050L290 1112L440 1080L425 1040L470 1068L510 1098L530 1116L553 1130L530 1138L550 1149L512 1158L525 1167L484 1168L440 1158L330 1168L240 1178L30 1190Z" fill="url(#low)" />
    <path d="M280 1168L300 1130L430 1105L425 1040L470 1068L510 1098L530 1116L553 1130L530 1138L550 1149L512 1158L525 1167L484 1168L440 1158L330 1168Z" fill="url(#wing)" />
    <path d={WING_FRAY} fill="#06364f" />
    <path d={TOP_FRAY} fill="#0a3fd0" />

    {/* windows and holes in the facade */}
    <path d="M130 850h69v12h-69zM100 853h30v27h-30zM128 886h66v60h-66z" fill="#0818f0" />
    <path d="M135 860l12-6h33v12l-30 3zM125 880h40l-8-6h24v6l-30 6zM132 904l15-3h36l3 20-27 9h-27z" fill="#06425f" />
    <path d="M120 874h24M144 871h33" stroke="#ffff00" strokeWidth="3" />
    <path d="M291 846h24v9h-15v-6h-9z" fill="#064a70" />
    <path d="M315 858h6v6h-6z" fill="#ffe000" />
    <path d="M120 993h90" stroke="#06305f" strokeWidth="8" strokeDasharray="3 6" />

    {/* ground strip */}
    <path d="M30 1190L228 1176L262 1212L320 1258L357 1296L360 1325L372 1340L130 1350L112 1350L132 1335L126 1290L112 1240L90 1210L30 1195Z" fill="url(#ground)" />
    <path d={HOLES} fill="#06364f" />
    <path d={FRAY} fill="#e0f000" />
    <path d={TREE_R} fill="#07c43c" />
    <path d={TREE_FAR} fill="#10d020" />
    <path d={TREE_R2} fill="#0a8f70" />
    <path d={TREE_L} fill="#0a9468" />

    {/* box lines in front of the cloud */}
    <g fill="none" stroke="#ffff00" strokeWidth="3">
      <path d="M40 943L397 914L738 886M397 914L442 1158L448 1312M40 1190L442 1158M418 1152L448 1312" />
    </g>
    <path d="M133 1177h60M163 1149v60" stroke="#c8c8c8" strokeWidth="3" />

    {OUTLIERS.map(([x, y, c]) => (
      <rect key={`${x}-${y}`} x={x} y={y} width="3" height="3" fill={c} />
    ))}
  </svg>
);

const View3D = () => (
  <main className="relative flex-1 overflow-hidden bg-linear-to-b/srgb from-[#0a6699] to-black">
    <Scene />
    <div className="absolute bottom-[6px] right-2 flex items-center gap-[27px]">
      <div className="mt-2 w-[273px]">
        <div className="flex h-[6px] items-center border-x border-white"><i className="h-px w-full bg-white" /></div>
        <div className="mt-1 text-center font-['Liberation_Sans',sans-serif] text-[13px] leading-4 text-white">10000</div>
      </div>
      <svg viewBox="0 0 34 38" className="h-[38px] w-[34px]" shapeRendering="crispEdges">
        <path d="M4 1l3 13" stroke="#00aaff" strokeWidth="3" />
        <path d="M8 14l24-1" stroke="#f00" strokeWidth="3" />
        <path d="M7 15v22" stroke="#0f0" strokeWidth="3" />
      </svg>
    </div>
  </main>
);

/* ---------- console ---------- */

const Console = () => (
  <section className="shrink-0 pb-[10px] pt-[6px]">
    <DockTitle title="Console" closable />
    <div className="ml-[11px] mr-[9px] flex h-[84px]">
      <div className="flex-1 border border-[#bdb9b3] bg-white text-[14px] leading-[19px] text-black">
        <p className="pl-1 text-[#820000]">[17:46:21] [PointPairRegistration] Scale: 1.75863 (already integrated in above matrix!)</p>
        <p className="bg-[#ededed] pl-1">[17:53:48] [computeApproxDistances] Time: 3.41 s.</p>
      </div>
      <div className="flex w-[13px] flex-col items-center overflow-hidden rounded-full border border-[#bdb9b3] bg-[#f4f3f2]">
        <svg viewBox="0 0 11 12" className="h-3 w-[11px]"><path d="M3 8h5L5.500 5.500z" fill="#555" /></svg>
        <div className="w-full flex-1 bg-[#dddcda]" />
        <div className="flex h-[34px] w-full flex-col items-center justify-center gap-[2px] rounded-full border border-[#95938f] bg-linear-to-r from-white to-[#dedddb]">
          <i className="h-px w-[3px] bg-[#8b8a87]" />
          <i className="h-px w-[3px] bg-[#8b8a87]" />
          <i className="h-px w-[3px] bg-[#8b8a87]" />
        </div>
        <svg viewBox="0 0 11 12" className="h-3 w-[11px]"><path d="M3 5h5L5.500 8z" fill="#8b8a87" /></svg>
      </div>
    </div>
  </section>
);

/* ---------- dialog ---------- */

interface CheckProps {
  label: string;
  checked?: boolean;
  disabled?: boolean;
}

const Check = ({ label, checked = false, disabled = false }: CheckProps) => (
  <label className={`flex items-center gap-2 ${disabled ? 'text-[#b5b3b0]' : ''}`}>
    <span className="relative h-[14px] w-[14px] shrink-0">
      <input
        type="checkbox"
        defaultChecked={checked}
        disabled={disabled}
        className="peer block h-[14px] w-[14px] appearance-none rounded-[2px] border border-[#8f8c87] bg-white checked:border-[#a34a2c] checked:bg-[#f07746] disabled:border-[#c4c2be] disabled:bg-[#dddcda]"
      />
      <svg viewBox="0 0 14 14" className="pointer-events-none absolute inset-0 hidden overflow-visible peer-checked:block">
        <path d="M3 6l4 5 8-9" fill="none" stroke="#4a3a35" strokeWidth="2" />
      </svg>
    </span>
    <span className="whitespace-nowrap">{label}</span>
  </label>
);

const Steppers = () => (
  <span className="flex w-4 shrink-0 flex-col rounded-r border-l border-[#cfcdca] bg-linear-to-b from-[#f8f8f7] to-[#e9e8e7]">
    <button type="button" aria-label="Increase" className="flex flex-1 items-center justify-center">
      <svg viewBox="0 0 6 4" className="h-1 w-[6px]"><path d="M0 4h6L3 1z" fill="#a4a29f" /></svg>
    </button>
    <button type="button" aria-label="Decrease" className="flex flex-1 items-center justify-center">
      <svg viewBox="0 0 6 4" className="h-1 w-[6px]"><path d="M0 0h6L3 3z" fill="#a4a29f" /></svg>
    </button>
  </span>
);

const DistanceDialog = () => (
  <div role="dialog" aria-label="Distance computation" className="absolute left-[704px] top-[240px] w-[420px] rounded-t-md bg-[#f2f1f0] text-[14px] text-[#4c4c4c] shadow-[0_4px_16px_rgba(0,0,0,0.6)]">
    <div className="relative flex h-7 items-center justify-center rounded-t-md bg-[#3e3d39]">
      <h2 className="text-[12px] font-bold text-[#7f7b72]">Distance computation</h2>
      <button type="button" aria-label="Close dialog" className="absolute right-[5px] h-4 w-4">
        <svg viewBox="0 0 16 16"><circle cx="8" cy="8" r="7.5" fill="#64625b" /><path d="M5.500 5.500l5 5M10.500 5.500l-5 5" stroke="#34332f" strokeWidth="1.2" /></svg>
      </button>
    </div>

    <form className="px-3 pb-[11px] pt-3" onSubmit={(e) => e.preventDefault()}>
      <div className="grid grid-cols-[77px_minmax(0,1fr)] items-center gap-y-2">
        <label htmlFor="compared">Compared</label>
        <input id="compared" readOnly defaultValue="fused - Cloud" className="h-[25px] rounded-[3px] border border-[#a5a29d] bg-white px-[3px]" />
        <label htmlFor="reference">Reference</label>
        <input id="reference" readOnly defaultValue="Mesh" className="h-[25px] rounded-[3px] border border-[#a5a29d] bg-white px-[3px]" />
      </div>

      <h3 className="mt-2 leading-5 font-bold">Precise results</h3>

      <div className="ml-4 mr-2 mt-1">
        <div role="tablist" className="relative flex h-[31px] items-end overflow-hidden">
          <button type="button" role="tab" className="z-10 h-[31px] w-[151px] shrink-0 whitespace-nowrap rounded-t border border-b-0 border-[#b1aea9] bg-linear-to-b from-white to-[#f6f6f6] pb-[2px]">
            General parameters
          </button>
          <button type="button" role="tab" className="h-[27px] w-[118px] shrink-0 whitespace-nowrap border-y border-r border-[#b1aea9] bg-linear-to-b from-[#ecebea] to-[#dddcda] pb-[2px]">
            Local modeling
          </button>
          <button type="button" role="tab" className="h-[27px] w-[118px] shrink-0 whitespace-nowrap border-y border-[#b1aea9] bg-linear-to-b from-[#ecebea] to-[#dddcda] pb-[2px] pl-[7px] text-left">
            Approx. results
          </button>
          <div className="absolute right-0 top-px z-10 flex gap-[2px]">
            <button type="button" aria-label="Previous tab" className="flex h-[28px] w-[14px] items-center justify-center rounded border border-[#cfcdca] bg-[#f2f1f0]">
              <svg viewBox="0 0 6 8" className="h-2 w-[6px]"><path d="M5 0v8L0 4z" fill="#b1aea9" /></svg>
            </button>
            <button type="button" aria-label="Next tab" className="flex h-[28px] w-[14px] items-center justify-center rounded border border-[#b1aea9] bg-[#f8f8f7]">
              <svg viewBox="0 0 6 8" className="h-2 w-[6px]"><path d="M0 0v8l5-4z" fill="#4c4c4c" /></svg>
            </button>
          </div>
        </div>

        <div className="h-[237px] rounded-b border border-t-0 border-[#b1aea9] bg-[#f6f6f6] pl-[11px] pr-[11px] pt-[10px]">
          <div className="grid grid-cols-[149px_minmax(0,1fr)] items-center gap-y-2">
            <label htmlFor="octree">Octree level</label>
            <div className="relative">
              <select id="octree" className="block h-[25px] w-full appearance-none rounded border border-[#b1aea9] bg-linear-to-b from-white to-[#ecebea] px-1">
                <option>AUTO</option>
              </select>
              <svg viewBox="0 0 6 12" className="pointer-events-none absolute right-[6px] top-[7px] h-3 w-[6px]"><path d="M0 3h6L3 0zM0 9h6L3 12z" fill="#4c4c4c" /></svg>
            </div>
            <div className="pb-1 pl-[2px]"><Check label="max. distance" /></div>
            <div className="flex h-[25px] rounded border border-[#cfcdca] bg-[#ebeae9]">
              <input aria-label="Maximum distance" disabled defaultValue="7589.897949" className="min-w-0 flex-1 px-[5px] text-[#a4a29f]" />
              <Steppers />
            </div>
          </div>

          <div className="mt-2 flex h-5 items-center pl-[2px]">
            <div className="w-[149px]"><Check checked label="signed distances" /></div>
            <Check label="flip normals" />
          </div>
          <div className="mt-2 flex h-5 items-center pl-[2px]"><Check disabled label="split X,Y and Z components" /></div>
          <div className="mt-[7px] flex h-[29px] items-center justify-between pl-[2px]">
            <Check checked label="multi-threaded" />
            <div className="flex h-[29px] items-center gap-2 border border-[#c1beb9] pr-px">
              <label htmlFor="threads" className="whitespace-nowrap">max thread count</label>
              <div className="flex h-[25px] w-[76px] rounded border border-[#b1aea9] bg-white">
                <input id="threads" defaultValue="12 / 12" className="min-w-0 flex-1 pl-[6px]" />
                <Steppers />
              </div>
            </div>
          </div>
        </div>

        <div className="mt-[6px] flex justify-end">
          <button type="submit" className="h-[27px] w-[75px] border border-[#ff4a4a] border-b-[#7a0000] border-r-[#7a0000] bg-[#ff0000] text-white">Compute</button>
        </div>
      </div>

      <div className="mt-[18px] flex justify-end gap-2">
        <button type="button" disabled className="h-[25px] w-[83px] rounded border border-[#cfcdca] bg-linear-to-b from-[#f6f6f5] to-[#efeeed] text-[#a4a29f]">Ok</button>
        <button type="button" className="h-[25px] w-[83px] rounded border border-[#b1aea9] bg-linear-to-b from-white to-[#ecebea]">Cancel</button>
      </div>
    </form>
  </div>
);

const App: React.FC = () => (
  <div className={`relative flex h-screen w-full flex-col overflow-hidden bg-[#f2f1f0] ${SANS}`}>
    <Header />
    <TopToolbar />
    <div className="flex min-h-0 flex-1">
      <LeftToolbar />
      <div className="flex min-w-0 flex-1 flex-col">
        <div className="flex min-h-0 flex-1">
          <aside className="flex w-[456px] shrink-0 flex-col pb-2">
            <DockTitle title="DB Tree" dim />
            <DbTree />
            <div className="h-[14px] shrink-0" />
            <DockTitle title="Properties" />
            <div className="ml-[11px] mr-[15px] min-h-0 flex-1 border border-[#bdb9b3] bg-white" />
          </aside>
          <View3D />
        </div>
        <Console />
      </div>
      <RightToolbar />
    </div>
    <footer className="relative h-[22px] shrink-0 border-t border-[#d5d3d0]">
      <span className="absolute bottom-[7px] right-[15px] font-['Liberation_Sans',sans-serif] text-[17px] leading-6 whitespace-nowrap text-[#8f8f8f] [text-shadow:-1px_-1px_0_#fff]">CSDN @windfighting</span>
    </footer>
    <DistanceDialog />
  </div>
);

export default App;
